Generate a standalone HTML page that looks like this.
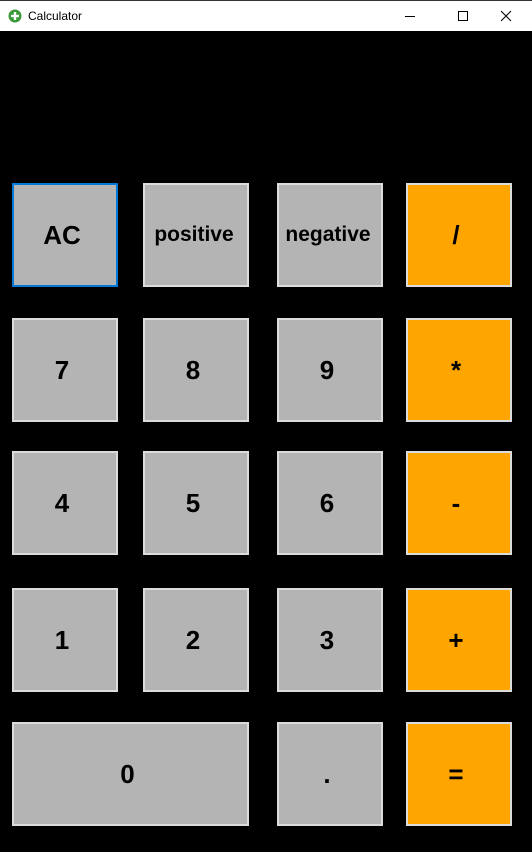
<!DOCTYPE html>
<html><head><style>
body{margin:0;width:532px;height:852px;background:#000;overflow:hidden;font-family:"Liberation Sans",sans-serif;position:relative}
.tb{position:absolute;left:0;top:0;width:532px;height:31px;background:#fff;border-top:1px solid #333;box-sizing:border-box}
.tb .t{position:absolute;left:28px;top:8px;font-size:12px;color:#000}
.b{position:absolute;box-sizing:border-box;border:2px solid #dcdcdc;background:#b4b4b4;display:flex;align-items:center;justify-content:center;font-weight:bold;font-size:26px;color:#000;padding-right:6px}
.o{background:#ffa500}
.s{font-size:21px;padding-right:4px}
</style></head><body>
<div class="tb">
<svg style="position:absolute;left:8px;top:8px" width="14" height="14" viewBox="0 0 14 14"><circle cx="7" cy="7" r="6.5" fill="#3a9a3a"/><rect x="3" y="5.8" width="8" height="2.4" fill="#fff"/><rect x="5.8" y="3" width="2.4" height="8" fill="#fff"/></svg>
<span class="t">Calculator</span>
<svg style="position:absolute;left:405px;top:9px" width="120" height="14"><line x1="0" y1="6.5" x2="10" y2="6.5" stroke="#000"/><rect x="53.5" y="1.5" width="9" height="9" fill="none" stroke="#000"/><path d="M96 1L106 11M106 1L96 11" stroke="#000"/></svg>
</div>
<div class="b" style="left:12px;top:183px;width:106px;height:104px;border-color:#0078d7">AC</div>
<div class="b s" style="left:143px;top:183px;width:106px;height:104px">positive</div>
<div class="b s" style="left:277px;top:183px;width:106px;height:104px">negative</div>
<div class="b o" style="left:406px;top:183px;width:106px;height:104px">/</div>
<div class="b" style="left:12px;top:318px;width:106px;height:104px">7</div>
<div class="b" style="left:143px;top:318px;width:106px;height:104px">8</div>
<div class="b" style="left:277px;top:318px;width:106px;height:104px">9</div>
<div class="b o" style="left:406px;top:318px;width:106px;height:104px">*</div>
<div class="b" style="left:12px;top:451px;width:106px;height:104px">4</div>
<div class="b" style="left:143px;top:451px;width:106px;height:104px">5</div>
<div class="b" style="left:277px;top:451px;width:106px;height:104px">6</div>
<div class="b o" style="left:406px;top:451px;width:106px;height:104px">-</div>
<div class="b" style="left:12px;top:588px;width:106px;height:104px">1</div>
<div class="b" style="left:143px;top:588px;width:106px;height:104px">2</div>
<div class="b" style="left:277px;top:588px;width:106px;height:104px">3</div>
<div class="b o" style="left:406px;top:588px;width:106px;height:104px">+</div>
<div class="b" style="left:12px;top:722px;width:237px;height:104px">0</div>
<div class="b" style="left:277px;top:722px;width:106px;height:104px">.</div>
<div class="b o" style="left:406px;top:722px;width:106px;height:104px">=</div>
</body></html>
